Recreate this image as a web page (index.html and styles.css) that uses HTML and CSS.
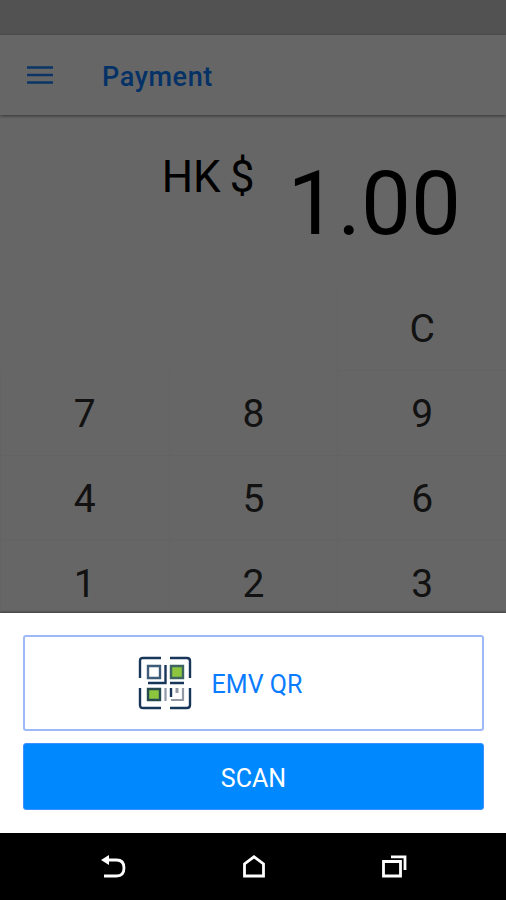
FILE: index.html
```html
<!DOCTYPE html>
<html lang="en">

<head>
  <meta charset="UTF-8">
  <meta name="viewport" content="width=device-width, initial-scale=1.0">
  <title>Payment</title>
  <link rel="stylesheet" href="styles.css">
</head>

<body>
  <main class="screen">
    <div class="status-bar"></div>
    <header class="header">
      <svg class="menu-icon" viewBox="0 0 26 18">
        <path d="M0 1.500h26M0 9h26M0 16.500h26" />
      </svg>
      <h1 class="title">Payment</h1>
    </header>

    <section class="amount">
      <span class="currency">HK<span class="currency-sign">$</span></span>
      <span class="value">1.00</span>
    </section>

    <section class="keypad">
      <span class="key key-empty"></span>
      <span class="key key-empty"></span>
      <span class="key">C</span>
      <span class="key">7</span>
      <span class="key">8</span>
      <span class="key">9</span>
      <span class="key">4</span>
      <span class="key">5</span>
      <span class="key">6</span>
      <span class="key">1</span>
      <span class="key">2</span>
      <span class="key">3</span>
    </section>

    <div class="backdrop">
      <section class="sheet">
        <button class="btn btn-outline">
          <svg class="qr-icon" viewBox="0 0 54 54">
            <g fill="none" stroke="#17365a" stroke-width="2.4">
              <path d="M23 2H5Q2 2 2 5v17M32 2h17q3 0 3 3v17M23 52H5q-3 0-3-3V32M32 52h17q3 0 3-3V32" />
              <path d="M27.500 9v18H10M32 27h14" />
              <path d="M33 32v9" />
            </g>
            <g stroke-width="2.4">
              <path d="M10 10h12v12H10z" fill="#fff" stroke="#3f5d78" />
              <path d="M33 10h12v12H33z" fill="#8cc63f" stroke="#3c6460" />
              <path d="M10 33h12v11H10z" fill="#8cc63f" stroke="#24494f" />
            </g>
            <g fill="none" stroke="#9298a6" stroke-width="2.2">
              <path d="M27.500 32v13M33 44h12V32" />
              <path d="M39 32v5" stroke-width="3" />
            </g>
          </svg>
          <span>EMV QR</span>
        </button>
        <button class="btn btn-primary">SCAN</button>
      </section>
    </div>
  </main>

  <nav class="nav-bar">
    <svg class="nav-icon" viewBox="0 0 28 26">
      <path d="M7 6h9.500q7.500 0 7.500 8t-7.500 8H4" />
      <path class="solid" d="M1 6l8-5v10z" />
    </svg>
    <svg class="nav-icon" viewBox="0 0 28 26">
      <path d="M4.500 22V10L14 2.800 23.500 10v12z" />
    </svg>
    <svg class="nav-icon" viewBox="0 0 28 26">
      <path d="M3.500 7.500h17v14.500h-17z" />
      <path d="M11 2.800h14V16" />
    </svg>
  </nav>
</body>

</html>
```
FILE: styles.css
```css
html {
  box-sizing: border-box;
  font-family: Roboto, sans-serif;
  font-size: 16px;
}

*,
*::after,
*::before {
  box-sizing: inherit;
}

body {
  margin: 0;
  height: 900px;
  display: flex;
  flex-direction: column;
  overflow: hidden;
  background-color: #000;
}

.screen {
  position: relative;
  height: 833px;
  overflow: hidden;
  background-color: #fff;
}

.status-bar {
  height: 35px;
  background-color: #cdcdcd;
}

.header {
  display: flex;
  align-items: center;
  gap: 49px;
  height: 80px;
  padding: 0 27px;
  box-shadow: 0 1px 3px rgba(0, 0, 0, .5);
}

.menu-icon {
  width: 26px;
  height: 18px;
  fill: none;
  stroke: #1a84ff;
  stroke-width: 2.4;
}

.title {
  margin: 3px 0 0;
  font-size: 27px;
  font-weight: 500;
  letter-spacing: .6px;
  color: #0a7cff;
}

.amount {
  display: flex;
  justify-content: flex-end;
  align-items: flex-start;
  gap: 33px;
  height: 171px;
  padding: 36px 45px 0 0;
  color: #000;
}

.currency {
  font-size: 44px;
  line-height: 52px;
}

.currency-sign {
  margin-left: 9px;
}

.value {
  font-size: 89px;
  line-height: 106px;
}

.keypad {
  display: grid;
  grid-template-columns: repeat(3, 1fr);
  grid-auto-rows: 85px;
}

.key {
  display: flex;
  justify-content: center;
  align-items: center;
  border-left: 1px solid #f8f8f8;
  border-bottom: 1px solid #f8f8f8;
  padding-top: 1px;
  font-size: 39px;
  color: #2d2d2d;
}

.key-empty {
  border-color: transparent;
}

.backdrop {
  position: absolute;
  inset: 0;
  display: flex;
  flex-direction: column;
  justify-content: flex-end;
  background-color: rgba(0, 0, 0, .6);
}

.sheet {
  display: flex;
  flex-direction: column;
  gap: 12px;
  height: 220px;
  padding: 22px 22px 23px 23px;
  background-color: #fff;
  box-shadow: 0 -1px 2px rgba(0, 0, 0, .4);
}

.btn {
  display: flex;
  justify-content: center;
  align-items: center;
  border: 2px solid #9db9f8;
  border-radius: 3px;
  padding: 0;
  font-family: inherit;
  font-size: 25px;
}

.btn-outline {
  gap: 20px;
  height: 96px;
  padding-right: 67px;
  background-color: #fff;
  color: #0a7cff;
}

.btn-outline span {
  padding-top: 3px;
}

.btn-primary {
  height: 67px;
  border: 1px solid #3d90ff;
  padding-top: 3px;
  background-color: #0088ff;
  color: #fff;
}

.qr-icon {
  width: 54px;
  height: 54px;
}

.nav-bar {
  display: flex;
  justify-content: center;
  align-items: center;
  gap: 112px;
  height: 67px;
  padding-left: 2px;
  background-color: #000;
}

.nav-icon {
  width: 28px;
  height: 26px;
  fill: none;
  stroke: #fff;
  stroke-width: 2.8;
}

.nav-icon .solid {
  fill: #fff;
  stroke: none;
}
```
